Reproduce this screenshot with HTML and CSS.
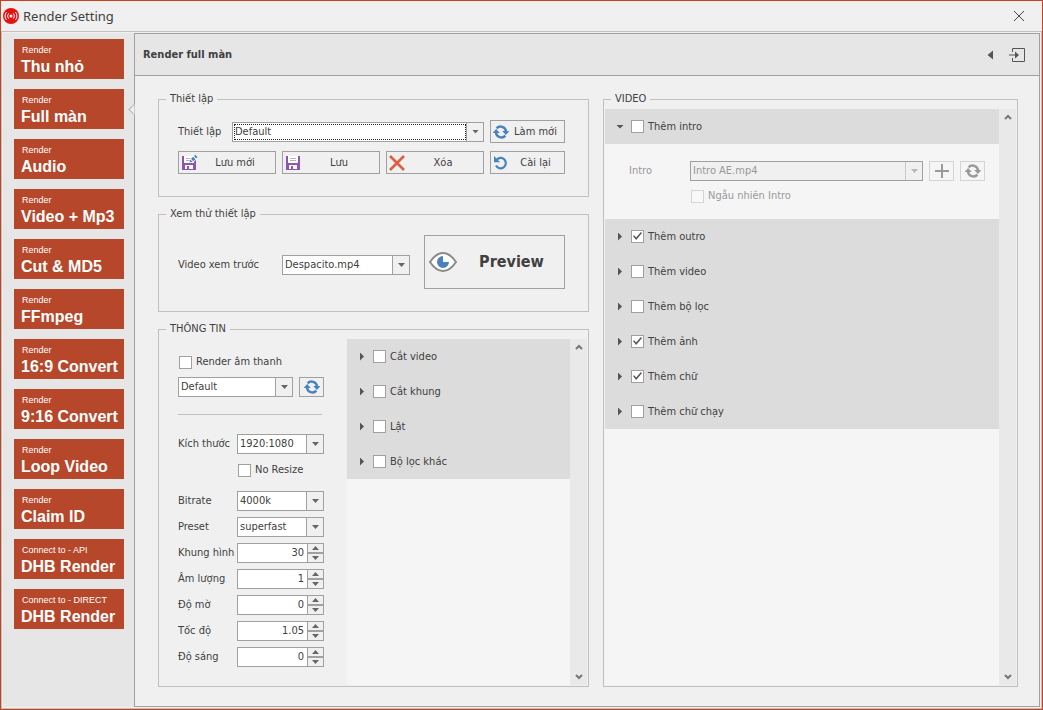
FILE: index.html
```html
<!DOCTYPE html>
<html lang="vi">
<head>
    <meta charset="UTF-8">
    <meta name="viewport" content="width=device-width, initial-scale=1.0">
    <title>Render Setting</title>
    <link rel="stylesheet" href="styles.css">
</head>
<body>
    <!-- shared icons -->
    <svg class="symbols" aria-hidden="true">
        <symbol id="i-refresh" viewBox="0 0 16 16">
            <path d="M3.6 4.4A5.4 5.4 0 0 1 13 7.400M12.4 11.6A5.4 5.4 0 0 1 3 8.600" fill="none" stroke="currentColor" stroke-width="2.400"/>
            <path d="M9.200 7H16.400L12.900 11zM-.4 9L3.100 5l3.700 4z" fill="currentColor"/>
        </symbol>
        <symbol id="i-undo" viewBox="0 0 16 16">
            <path d="M3.5 5A5.2 5.2 0 1 1 3 10.5" fill="none" stroke="currentColor" stroke-width="2.2"/>
            <path d="M1 1v6.2h6.2z" fill="currentColor"/>
        </symbol>
        <symbol id="i-save" viewBox="0 0 16 16">
            <path d="M1 1h14v14H1z" fill="#8e56b0"/>
            <path d="M3 1h10v7H3zM4 10h8v4H4z" fill="#fff"/>
            <path d="M5 3.500h6M5 5.500h6" stroke="#b4b4b4"/>
            <path d="M6 11h2v3H6z" fill="#8e56b0"/>
        </symbol>
        <symbol id="i-up" viewBox="0 0 8 6"><path d="M1 5l3-3 3 3" fill="none" stroke="currentColor" stroke-width="2"/></symbol>
        <symbol id="i-down" viewBox="0 0 8 6"><path d="M1 1l3 3 3-3" fill="none" stroke="currentColor" stroke-width="2"/></symbol>
    </svg>

    <div class="window">
        <header class="titlebar">
            <svg class="logo" viewBox="0 0 16 16">
                <circle cx="8" cy="8" r="8" fill="#e81010"/>
                <path d="M3.6 4a6 6 0 0 0 0 8M5.6 5.4a4 4 0 0 0 0 5.2M10.4 5.4a4 4 0 0 1 0 5.2M12.4 4a6 6 0 0 1 0 8" fill="none" stroke="#fff"/>
                <circle cx="8" cy="8" r="1.5" fill="#fff"/>
            </svg>
            <h1>Render Setting</h1>
            <button class="plain close" aria-label="Close">
                <svg width="12" height="12" viewBox="0 0 12 12"><path d="M1 1l10 10M11 1L1 11" stroke="#444" fill="none"/></svg>
            </button>
        </header>

        <div class="body">
            <nav class="sidebar">
                <button class="tile"><small>Render</small><b>Thu nhỏ</b></button>
                <button class="tile active"><small>Render</small><b>Full màn</b></button>
                <button class="tile"><small>Render</small><b>Audio</b></button>
                <button class="tile"><small>Render</small><b>Video + Mp3</b></button>
                <button class="tile"><small>Render</small><b>Cut &amp; MD5</b></button>
                <button class="tile"><small>Render</small><b>FFmpeg</b></button>
                <button class="tile"><small>Render</small><b>16:9 Convert</b></button>
                <button class="tile"><small>Render</small><b>9:16 Convert</b></button>
                <button class="tile"><small>Render</small><b>Loop Video</b></button>
                <button class="tile"><small>Render</small><b>Claim ID</b></button>
                <button class="tile"><small>Connect to - API</small><b>DHB Render</b></button>
                <button class="tile"><small>Connect to - DIRECT</small><b>DHB Render</b></button>
            </nav>

            <main class="main">
                <div class="page-head">
                    <h2>Render full màn</h2>
                    <button class="plain" aria-label="Back">
                        <svg width="6" height="10" viewBox="0 0 6 10"><path d="M6 .5v9L.5 5z" fill="#555"/></svg>
                    </button>
                    <button class="plain" aria-label="Dock">
                        <svg width="17" height="14" viewBox="0 0 17 14"><path d="M3.5 4V.5h12v13h-12V10M0 7h7" fill="none" stroke="#555"/><path d="M6 3.5v7L10 7z" fill="#555"/></svg>
                    </button>
                </div>

                <div class="columns">
                    <div class="left">
                        <fieldset>
                            <legend>Thiết lập</legend>
                            <div class="setup">
                                <div class="setup-pick">
                                    <label for="preset-name">Thiết lập</label>
                                    <span class="combo focused"><select id="preset-name"><option>Default</option></select></span>
                                </div>
                                <button class="btn"><svg class="blue"><use href="#i-refresh"/></svg><span>Làm mới</span></button>
                                <button class="btn">
                                    <svg viewBox="0 0 16 16"><use href="#i-save"/><path d="M8 8l1.2-5L13-.5 17 3l-4.500 4z" fill="#fff"/><path d="M8.500 7.500l.8-3 2.500 2.200zM10 3.800l2.200-2 2.300 2.400-2.200 2zM13 1l1.200-1.200L16.600 2.200l-1.300 1.200z" fill="#4a82bd"/></svg>
                                    <span>Lưu mới</span>
                                </button>
                                <button class="btn"><svg><use href="#i-save"/></svg><span>Lưu</span></button>
                                <button class="btn">
                                    <svg viewBox="0 0 16 16"><path d="M1 1l14 14M15 1L1 15" stroke="#dd5f42" stroke-width="2.6" fill="none"/></svg>
                                    <span>Xóa</span>
                                </button>
                                <button class="btn"><svg class="blue"><use href="#i-undo"/></svg><span>Cài lại</span></button>
                            </div>
                        </fieldset>

                        <fieldset>
                            <legend>Xem thử thiết lập</legend>
                            <div class="try">
                                <label for="sample">Video xem trước</label>
                                <span class="combo"><select id="sample"><option>Despacito.mp4</option></select></span>
                                <button class="btn preview">
                                    <svg viewBox="0 0 28 20">
                                        <path d="M1 10Q7 1 14 1t13 9q-6 9-13 9T1 10z" fill="#fff" stroke="#8a8a8a" stroke-width="2"/>
                                        <path d="M14 4v6h6a6 6 0 1 1-6-6z" fill="#4a82bd"/>
                                    </svg>
                                    <span>Preview</span>
                                </button>
                            </div>
                        </fieldset>

                        <fieldset class="grow">
                            <legend>THÔNG TIN</legend>
                            <div class="info">
                                <div class="options">
                                    <label class="check"><input type="checkbox">Render âm thanh</label>
                                    <div class="audio">
                                        <span class="combo"><select aria-label="Render âm thanh"><option>Default</option></select></span>
                                        <button class="btn icon" aria-label="Làm mới"><svg class="blue"><use href="#i-refresh"/></svg></button>
                                    </div>
                                    <hr>
                                    <div class="row">
                                        <label for="size">Kích thước</label>
                                        <span class="combo"><select id="size"><option>1920:1080</option></select></span>
                                    </div>
                                    <label class="check no-resize"><input type="checkbox">No Resize</label>
                                    <div class="row">
                                        <label for="bitrate">Bitrate</label>
                                        <span class="combo"><select id="bitrate"><option>4000k</option></select></span>
                                    </div>
                                    <div class="row">
                                        <label for="speed-preset">Preset</label>
                                        <span class="combo"><select id="speed-preset"><option>superfast</option></select></span>
                                    </div>
                                    <div class="row">
                                        <label for="fps">Khung hình</label>
                                        <span class="spin"><input type="number" id="fps" value="30"><button class="up" aria-label="+"></button><button class="down" aria-label="-"></button></span>
                                    </div>
                                    <div class="row">
                                        <label for="volume">Âm lượng</label>
                                        <span class="spin"><input type="number" id="volume" value="1"><button class="up" aria-label="+"></button><button class="down" aria-label="-"></button></span>
                                    </div>
                                    <div class="row">
                                        <label for="blur">Độ mờ</label>
                                        <span class="spin"><input type="number" id="blur" value="0"><button class="up" aria-label="+"></button><button class="down" aria-label="-"></button></span>
                                    </div>
                                    <div class="row">
                                        <label for="tempo">Tốc độ</label>
                                        <span class="spin"><input type="number" id="tempo" step="0.05" value="1.05"><button class="up" aria-label="+"></button><button class="down" aria-label="-"></button></span>
                                    </div>
                                    <div class="row">
                                        <label for="light">Độ sáng</label>
                                        <span class="spin"><input type="number" id="light" value="0"><button class="up" aria-label="+"></button><button class="down" aria-label="-"></button></span>
                                    </div>
                                </div>

                                <div class="panel">
                                    <div class="list">
                                        <div class="item"><button class="toggle" aria-label="Mở"></button><label class="check"><input type="checkbox">Cắt video</label></div>
                                        <div class="item"><button class="toggle" aria-label="Mở"></button><label class="check"><input type="checkbox">Cắt khung</label></div>
                                        <div class="item"><button class="toggle" aria-label="Mở"></button><label class="check"><input type="checkbox">Lật</label></div>
                                        <div class="item"><button class="toggle" aria-label="Mở"></button><label class="check"><input type="checkbox">Bộ lọc khác</label></div>
                                    </div>
                                    <div class="scroll">
                                        <button class="plain" aria-label="Scroll up"><svg><use href="#i-up"/></svg></button>
                                        <button class="plain" aria-label="Scroll down"><svg><use href="#i-down"/></svg></button>
                                    </div>
                                </div>
                            </div>
                        </fieldset>
                    </div>

                    <fieldset class="video">
                        <legend>VIDEO</legend>
                        <div class="panel">
                            <div class="list">
                                <div class="item"><button class="toggle open" aria-label="Đóng"></button><label class="check"><input type="checkbox">Thêm intro</label></div>
                                <div class="detail">
                                    <label for="intro">Intro</label>
                                    <span class="combo"><select id="intro" disabled><option>Intro AE.mp4</option></select></span>
                                    <button class="btn icon" aria-label="Thêm" disabled><svg viewBox="0 0 16 16"><path d="M1 8h14M8 1v14" stroke="currentColor" stroke-width="2"/></svg></button>
                                    <button class="btn icon" aria-label="Làm mới" disabled><svg><use href="#i-refresh"/></svg></button>
                                    <label class="check random"><input type="checkbox" disabled>Ngẫu nhiên Intro</label>
                                </div>
                                <div class="item"><button class="toggle" aria-label="Mở"></button><label class="check"><input type="checkbox" checked>Thêm outro</label></div>
                                <div class="item"><button class="toggle" aria-label="Mở"></button><label class="check"><input type="checkbox">Thêm video</label></div>
                                <div class="item"><button class="toggle" aria-label="Mở"></button><label class="check"><input type="checkbox">Thêm bộ lọc</label></div>
                                <div class="item"><button class="toggle" aria-label="Mở"></button><label class="check"><input type="checkbox" checked>Thêm ảnh</label></div>
                                <div class="item"><button class="toggle" aria-label="Mở"></button><label class="check"><input type="checkbox" checked>Thêm chữ</label></div>
                                <div class="item"><button class="toggle" aria-label="Mở"></button><label class="check"><input type="checkbox">Thêm chữ chạy</label></div>
                            </div>
                            <div class="scroll">
                                <button class="plain" aria-label="Scroll up"><svg><use href="#i-up"/></svg></button>
                                <button class="plain" aria-label="Scroll down"><svg><use href="#i-down"/></svg></button>
                            </div>
                        </div>
                    </fieldset>
                </div>
            </main>
        </div>
    </div>
</body>
</html>
```

FILE: styles.css
```css
* {
    box-sizing: border-box;
}

body {
    margin: 0;
    background: #f0f0f0;
    color: #404040;
    font: 11px/14px "DejaVu Sans Condensed", "Noto Sans", sans-serif;
}

button, input, select {
    margin: 0;
    padding: 0;
    font: inherit;
    color: inherit;
}

svg {
    display: block;
    flex: none;
    overflow: visible;
}

.symbols {
    position: absolute;
    width: 0;
    height: 0;
}

.plain {
    display: flex;
    padding: 0;
    border: 0;
    background: none;
}

/* window frame */
.window {
    min-height: 100vh;
    display: flex;
    flex-direction: column;
    border: 1px solid #c8421c;
}

.titlebar {
    height: 30px;
    display: flex;
    align-items: center;
    gap: 4px;
    padding: 0 17px 0 2px;
}

.titlebar h1 {
    flex: 1;
    margin: 0;
    font: 13px/20px "Noto Sans", sans-serif;
}

.logo {
    width: 16px;
    height: 16px;
}

.body {
    flex: 1;
    display: flex;
    padding: 1px;
    border: 1px solid #c0c0c0;
}

/* left tiles */
.sidebar {
    width: 131px;
    display: flex;
    flex-direction: column;
    gap: 10px;
    padding: 6px 10px 6px 11px;
    background: #e6e6e6;
}

.tile {
    position: relative;
    height: 40px;
    padding: 2px 0 0 7px;
    border: 0;
    background: #b7472a;
    color: #fff;
    font-family: "Liberation Sans", Arial, sans-serif;
    text-align: left;
    white-space: nowrap;
}

.tile small, .tile b {
    display: block;
}

.tile small {
    font-size: 9px;
    line-height: 14px;
    padding-left: 1px;
}

.tile b {
    font-size: 16px;
    line-height: 20px;
}

/* notch that points from the page to the active tile */
.tile.active::after {
    content: "";
    position: absolute;
    top: 16px;
    right: -15px;
    width: 8px;
    height: 8px;
    border: 1px solid #a0a0a0;
    border-width: 0 0 1px 1px;
    background: #f0f0f0;
    transform: rotate(45deg);
    clip-path: polygon(0 0, 0 100%, 100% 100%);
}

.main {
    flex: 1;
    min-width: 0;
    display: flex;
    flex-direction: column;
    border: 1px solid #a0a0a0;
}

.page-head {
    height: 42px;
    display: flex;
    align-items: center;
    gap: 16px;
    padding: 0 13px 0 8px;
    border-bottom: 1px solid #a0a0a0;
    background: #e6e6e6;
}

.page-head h2 {
    flex: 1;
    margin: 0;
    font-size: 11px;
    line-height: 14px;
}

.columns {
    flex: 1;
    display: grid;
    grid-template-columns: minmax(0, 431fr) minmax(0, 415fr);
    gap: 14px;
    padding: 16px 21px 19px 23px;
}

.left {
    display: flex;
    flex-direction: column;
    gap: 10px;
}

fieldset {
    min-width: 0;
    margin: 0;
    padding: 0;
    border: 1px solid #c0c0c0;
}

legend {
    margin-left: 7px;
    padding: 0 4px;
}

.grow {
    flex: 1;
}

/* controls */
.combo {
    position: relative;
    display: flex;
    height: 20px;
    border: 1px solid #a0a0a0;
    background: #fff;
}

.combo select {
    flex: 1;
    min-width: 0;
    padding: 0 18px 0 2px;
    border: 0;
    outline: 0;
    background: none;
    appearance: none;
}

.combo::after {
    content: "";
    position: absolute;
    top: 0;
    right: 0;
    width: 16px;
    height: 18px;
    border-left: 1px solid #a0a0a0;
    background: #f0f0f0;
    pointer-events: none;
}

.combo::before {
    content: "";
    position: absolute;
    z-index: 1;
    top: 7px;
    right: 4px;
    width: 7px;
    height: 4px;
    background: #666;
    clip-path: polygon(0 0, 100% 0, 50% 100%);
    pointer-events: none;
}

.combo.focused select {
    margin: 1px 17px 1px 1px;
    padding: 0;
    border: 1px dotted #222;
}

.combo:has(:disabled) {
    background: #f0f0f0;
    color: #999;
}

.combo:has(:disabled)::before {
    background: #b8b8b8;
}

.combo:has(:disabled)::after {
    border-color: #c8c8c8;
}

.combo select:disabled {
    opacity: 1;
}

.btn {
    display: flex;
    align-items: center;
    height: 23px;
    padding: 0 2px;
    border: 1px solid #a0a0a0;
    background: #f0f0f0;
}

.btn svg {
    width: 16px;
    height: 16px;
}

.btn span {
    flex: 1;
    text-align: center;
}

.blue {
    color: #4a82bd;
}

.btn.icon {
    width: 25px;
    height: 20px;
    justify-content: center;
}

.btn.icon:disabled {
    border-color: #d4d4d4;
    background: none;
    color: #999;
}

.check {
    display: flex;
    align-items: center;
    gap: 4px;
}

.check input {
    appearance: none;
    width: 13px;
    height: 13px;
    border: 1px solid #a0a0a0;
    background: #fff;
}

.check input:checked::after {
    content: "";
    display: block;
    width: 9px;
    height: 8px;
    margin: 1px;
    background: #555;
    clip-path: polygon(0 50%, 12% 40%, 35% 70%, 88% 0, 100% 12%, 35% 100%);
}

.check input:disabled {
    border-color: #d4d4d4;
    background: #f8f8f8;
}

.spin {
    display: grid;
    grid-template-columns: 1fr 16px;
    grid-template-rows: 9px 9px;
    height: 20px;
    border: 1px solid #a0a0a0;
    background: #fff;
}

.spin input {
    grid-row: span 2;
    min-width: 0;
    width: 100%;
    padding-right: 3px;
    border: 0;
    outline: 0;
    background: none;
    text-align: right;
    appearance: textfield;
}

.spin input::-webkit-inner-spin-button {
    appearance: none;
    margin: 0;
}

.spin button {
    display: flex;
    align-items: center;
    justify-content: center;
    border: 0 solid #a0a0a0;
    border-left-width: 1px;
    background: #f0f0f0;
}

.spin button::before {
    content: "";
    width: 7px;
    height: 4px;
    background: #666;
    clip-path: polygon(0 0, 100% 0, 50% 100%);
}

.spin .up {
    border-bottom-width: 1px;
}

.spin .up::before {
    clip-path: polygon(0 100%, 100% 100%, 50% 0);
}

.spin .down {
    border-top-width: 1px;
}

/* preset group */
.setup {
    display: grid;
    grid-template-columns: repeat(3, minmax(0, 98fr)) minmax(0, 75fr);
    gap: 8px 6px;
    padding: 14px 23px 22px 19px;
}

.setup-pick {
    grid-column: span 3;
    display: flex;
    align-items: center;
}

.setup-pick label {
    width: 54px;
}

.setup-pick .combo {
    flex: 1;
}

/* preview group */
.try {
    display: grid;
    grid-template-columns: 104px 1fr 141px;
    align-items: center;
    padding: 14px 23px 22px 19px;
}

.try label, .try .combo {
    margin-top: 6px;
}

.try .combo {
    margin-right: 14px;
}

.preview {
    height: 54px;
    padding: 0 4px;
    font-size: 16px;
    font-weight: bold;
}

.preview span {
    padding-left: 6px;
}

.preview svg {
    width: 28px;
    height: 20px;
}

/* info group */
.info {
    height: 100%;
    display: grid;
    grid-template-columns: 146px minmax(0, 1fr);
    gap: 23px;
    padding: 3px 1px 1px 19px;
}

.options {
    display: flex;
    flex-direction: column;
    gap: 6px;
    padding-top: 16px;
}

.options > .check {
    padding-left: 1px;
}

.audio {
    display: flex;
    gap: 6px;
    margin-top: 2px;
}

.audio .combo {
    flex: 1;
}

.options hr {
    width: 144px;
    margin: 11px 0 13px;
    border: 0;
    border-top: 1px solid #c0c0c0;
}

.row {
    display: grid;
    grid-template-columns: 59px 1fr;
    align-items: center;
    white-space: nowrap;
}

.options > .no-resize {
    margin: 3px 0 8px;
    padding-left: 60px;
}

/* scrolling lists */
.panel {
    height: 100%;
    display: flex;
    background: #f5f5f5;
}

.list {
    flex: 1;
    min-width: 0;
}

.item {
    height: 35px;
    display: flex;
    align-items: center;
    gap: 7px;
    padding-left: 11px;
    background: #dcdcdc;
}

.toggle {
    display: flex;
    align-items: center;
    justify-content: center;
    width: 8px;
    height: 14px;
    border: 0;
    background: none;
}

.toggle::before {
    content: "";
    flex: none;
    width: 4px;
    height: 8px;
    background: #555;
    clip-path: polygon(0 0, 100% 50%, 0 100%);
}

.toggle.open::before {
    width: 8px;
    height: 4px;
    clip-path: polygon(0 0, 100% 0, 50% 100%);
}

.scroll {
    width: 17px;
    display: flex;
    flex-direction: column;
    justify-content: space-between;
    align-items: center;
    padding: 5px 0;
    background: #e9e9e9;
    color: #777;
}

.scroll svg {
    width: 8px;
    height: 6px;
}

.video .panel {
    padding: 3px 1px 1px;
    background: none;
}

.video .list {
    background: #f5f5f5;
}

.detail {
    display: grid;
    grid-template-columns: 55px 1fr 25px 25px;
    gap: 8px 6px;
    align-items: center;
    padding: 17px 14px 16px 24px;
    color: #999;
}

.random {
    grid-column: 2;
    padding-left: 1px;
}
```
